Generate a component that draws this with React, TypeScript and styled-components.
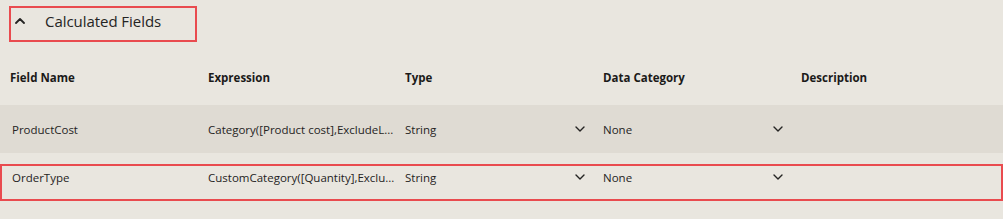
import React from "react";
import styled, { createGlobalStyle } from "styled-components";

const GlobalStyle = createGlobalStyle`
  html, body {
    margin: 0;
    padding: 0;
    background: #e9e6df;
  }
  body {
    font-family: "Open Sans", "Noto Sans", sans-serif;
    color: #252423;
  }
`;

const Page = styled.div`
  width: 1003px;
  height: 219px;
  padding-top: 6px;
  box-sizing: border-box;
  background: #e9e6df;
  overflow: hidden;
`;

const TitleBox = styled.div`
  margin-left: 9px;
  width: 188px;
  height: 36px;
  box-sizing: border-box;
  border: 2px solid #e94b4f;
  display: flex;
  align-items: center;
  padding: 0 0 7px 4px;
  gap: 20px;
`;

const Title = styled.span`
  font-size: 15px;
  color: #252423;
  letter-spacing: -0.05px;
`;

const Grid = styled.div`
  display: grid;
  grid-template-columns: 198px 197px 198px 198px 1fr;
  padding-left: 10px;
  align-items: center;
`;

const HeaderRow = styled(Grid)`
  margin-top: 15px;
  height: 40px;
`;

const HeaderCell = styled.div`
  font-size: 11.5px;
  font-weight: 700;
  color: #1b1a19;
`;

const Row = styled(Grid)<{ $shaded?: boolean; $marked?: boolean }>`
  position: relative;
  height: 48px;
  background: ${(p) => (p.$shaded ? "#dfdbd3" : "transparent")};
  &::after {
    content: "";
    display: ${(p) => (p.$marked ? "block" : "none")};
    position: absolute;
    left: 0;
    right: 0;
    top: 11px;
    bottom: 0;
    border: 2px solid #e94b4f;
    pointer-events: none;
  }
`;

const RowsWrap = styled.div`
  margin-top: 8px;
`;

const Cell = styled.div<{ $indent?: number }>`
  font-size: 11.5px;
  padding-left: ${(p) => p.$indent ?? 0}px;
  white-space: nowrap;
`;

const Select = styled.div`
  display: flex;
  align-items: center;
  justify-content: space-between;
  font-size: 11.5px;
  padding-right: 18px;
`;

const Chevron = ({ up }: { up?: boolean }) => (
  <svg width="10" height="6" viewBox="0 0 10 6" fill="none">
    <polyline
      points={up ? "1,5 5,1 9,5" : "1,1 5,5 9,1"}
      stroke="#252423"
      strokeWidth={up ? 1.8 : 1.4}
      strokeLinecap="round"
      strokeLinejoin="round"
    />
  </svg>
);

const rows = [
  { name: "ProductCost", expr: "Category([Product cost],ExcludeL...", type: "String", cat: "None" },
  { name: "OrderType", expr: "CustomCategory([Quantity],Exclu...", type: "String", cat: "None" },
];

export default function App() {
  return (
    <Page>
      <GlobalStyle />
      <TitleBox>
        <Chevron up />
        <Title>Calculated Fields</Title>
      </TitleBox>
      <HeaderRow>
        <HeaderCell>Field Name</HeaderCell>
        <HeaderCell>Expression</HeaderCell>
        <HeaderCell>Type</HeaderCell>
        <HeaderCell>Data Category</HeaderCell>
        <HeaderCell>Description</HeaderCell>
      </HeaderRow>
      <RowsWrap>
        {rows.map((r, i) => (
          <Row key={r.name} $shaded={i === 0} $marked={i === 1}>
            <Cell $indent={2}>{r.name}</Cell>
            <Cell>{r.expr}</Cell>
            <Select>
              <span>{r.type}</span>
              <Chevron />
            </Select>
            <Select>
              <span>{r.cat}</span>
              <Chevron />
            </Select>
            <Cell />
          </Row>
        ))}
      </RowsWrap>
    </Page>
  );
}
